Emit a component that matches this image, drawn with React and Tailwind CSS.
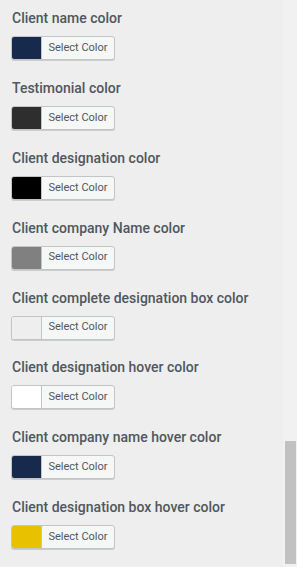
import React from "react";

const items = [
  { label: "Client name color", color: "bg-[#172a4e]" },
  { label: "Testimonial color", color: "bg-[#2e2e2e]" },
  { label: "Client designation color", color: "bg-[#000000]" },
  { label: "Client company Name color", color: "bg-[#808080]" },
  { label: "Client complete designation box color", color: "bg-[#eeeeee]" },
  { label: "Client designation hover color", color: "bg-[#ffffff]" },
  { label: "Client company name hover color", color: "bg-[#172a4e]" },
  { label: "Client designation box hover color", color: "bg-[#e8c100]" },
];

export default function App() {
  return (
    <div className="flex h-[567px] w-[297px] overflow-hidden bg-[#eeeeee] font-['Roboto',sans-serif]">
      <div className="flex w-[283px] flex-col pl-[11px] pt-[8px]">
        {items.map((it, i) => (
          <div key={i} className="flex h-[70px] flex-col">
            <div className="h-[20px] pl-px text-[14px] font-medium leading-[20px] text-[#50575e] whitespace-nowrap">
              {it.label}
            </div>
            <div className="mt-[8px] flex h-[24px] w-[104px] overflow-hidden rounded-[3px] border border-[#c3c4c7] bg-[#f6f7f7] shadow-[0_1px_0_#ccc]">
              <div className={`w-[30px] border-r border-[#c3c4c7] ${it.color}`} />
              <div className="flex flex-1 items-center justify-center text-[11px] text-[#50575e]">
                Select Color
              </div>
            </div>
          </div>
        ))}
      </div>
      <div className="flex w-[14px] flex-col bg-[#f1f1f1] pl-[2px] pr-[1px] pt-[441px]">
        <div className="h-[123px] bg-[#c1c1c1]" />
      </div>
    </div>
  );
}
